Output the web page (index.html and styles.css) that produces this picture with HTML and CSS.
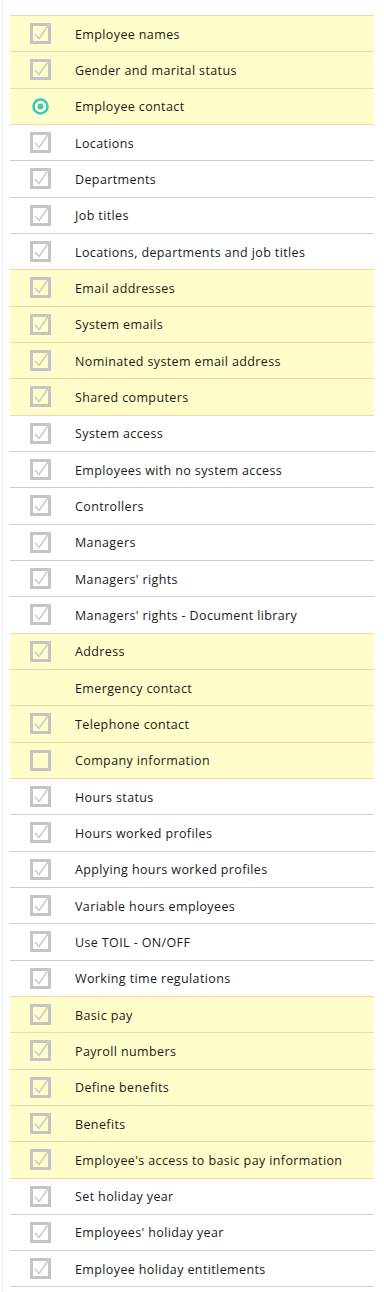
FILE: index.html
```
<!DOCTYPE html>
<html lang="en">
<head>
    <meta charset="UTF-8">
    <title>Settings</title>
    <link rel="stylesheet" href="styles.css">
</head>
<body>
    <div class="page">
        <ul class="steps" id="steps"></ul>
    </div>

    <svg width="0" height="0" class="defs">
        <symbol id="tick" viewBox="0 0 21 21">
            <rect x="1.5" y="1.5" width="18" height="18" fill="none" stroke="#c4c4c4" stroke-width="3"/>
            <polyline points="5,11 9,15.5 19.5,0.5" fill="none" stroke="#cdcdcd" stroke-width="1.7"/>
        </symbol>
        <symbol id="empty" viewBox="0 0 21 21">
            <rect x="1.5" y="1.5" width="18" height="18" fill="none" stroke="#c4c4c4" stroke-width="3"/>
        </symbol>
        <symbol id="radio" viewBox="0 0 21 21">
            <circle cx="10.5" cy="10.5" r="7" fill="none" stroke="#3cc7c9" stroke-width="2.6"/>
            <circle cx="10.5" cy="10.5" r="3" fill="#3cc7c9"/>
        </symbol>
    </svg>

    <script>
        // 列表数据: 名称, 图标, 是否高亮
        const steps = [
            ['Employee names', 'tick', 1],
            ['Gender and marital status', 'tick', 1],
            ['Employee contact', 'radio', 1],
            ['Locations', 'tick', 0],
            ['Departments', 'tick', 0],
            ['Job titles', 'tick', 0],
            ['Locations, departments and job titles', 'tick', 0],
            ['Email addresses', 'tick', 1],
            ['System emails', 'tick', 1],
            ['Nominated system email address', 'tick', 1],
            ['Shared computers', 'tick', 1],
            ['System access', 'tick', 0],
            ['Employees with no system access', 'tick', 0],
            ['Controllers', 'tick', 0],
            ['Managers', 'tick', 0],
            ["Managers' rights", 'tick', 0],
            ["Managers' rights - Document library", 'tick', 0],
            ['Address', 'tick', 1],
            ['Emergency contact', '', 1],
            ['Telephone contact', 'tick', 1],
            ['Company information', 'empty', 1],
            ['Hours status', 'tick', 0],
            ['Hours worked profiles', 'tick', 0],
            ['Applying hours worked profiles', 'tick', 0],
            ['Variable hours employees', 'tick', 0],
            ['Use TOIL - ON/OFF', 'tick', 0],
            ['Working time regulations', 'tick', 0],
            ['Basic pay', 'tick', 1],
            ['Payroll numbers', 'tick', 1],
            ['Define benefits', 'tick', 1],
            ['Benefits', 'tick', 1],
            ["Employee's access to basic pay information", 'tick', 1],
            ['Set holiday year', 'tick', 0],
            ["Employees' holiday year", 'tick', 0],
            ['Employee holiday entitlements', 'tick', 0]
        ];

        const list = document.getElementById('steps');
        steps.forEach(function(s) {
            const li = document.createElement('li');
            li.className = s[2] ? 'step hl' : 'step';
            const icon = s[1] ? '<svg class="icon"><use href="#' + s[1] + '"/></svg>' : '';
            li.innerHTML = '<span class="icon-box">' + icon + '</span><span class="label"></span>';
            li.querySelector('.label').textContent = s[0];
            list.appendChild(li);
        });
    </script>
</body>
</html>
```

FILE: styles.css
```
/* 全局样式 */
* {
    margin: 0;
    padding: 0;
    box-sizing: border-box;
}

body {
    background: #ffffff;
    font-family: 'Open Sans', 'DejaVu Sans', sans-serif;
    color: #1a1a1a;
}

.defs {
    position: absolute;
}

.page {
    margin-left: 2px;
    border-left: 1px solid #f1f1f1;
    padding: 15px 0 6px 7px;
    min-height: 1292px;
}

/* 列表 */
.steps {
    list-style: none;
    width: 364px;
    border-top: 1px solid #fcd3a6;
}

.step {
    display: flex;
    align-items: center;
    height: 36.33px;
    padding-left: 20px;
    border-bottom: 1px solid #cfcfcf;
    font-size: 12.5px;
}

.step.hl {
    background: #fffdc9;
    border-bottom-color: #fcd3a6;
}

.step:has(+ .hl) {
    border-bottom-color: #fcd3a6;
}

.icon-box {
    width: 21px;
    height: 21px;
    margin-right: 24px;
    flex-shrink: 0;
}

.icon {
    width: 21px;
    height: 21px;
    overflow: visible;
    display: block;
}

.label {
    letter-spacing: 0.38px;
    padding-top: 1px;
}
```
